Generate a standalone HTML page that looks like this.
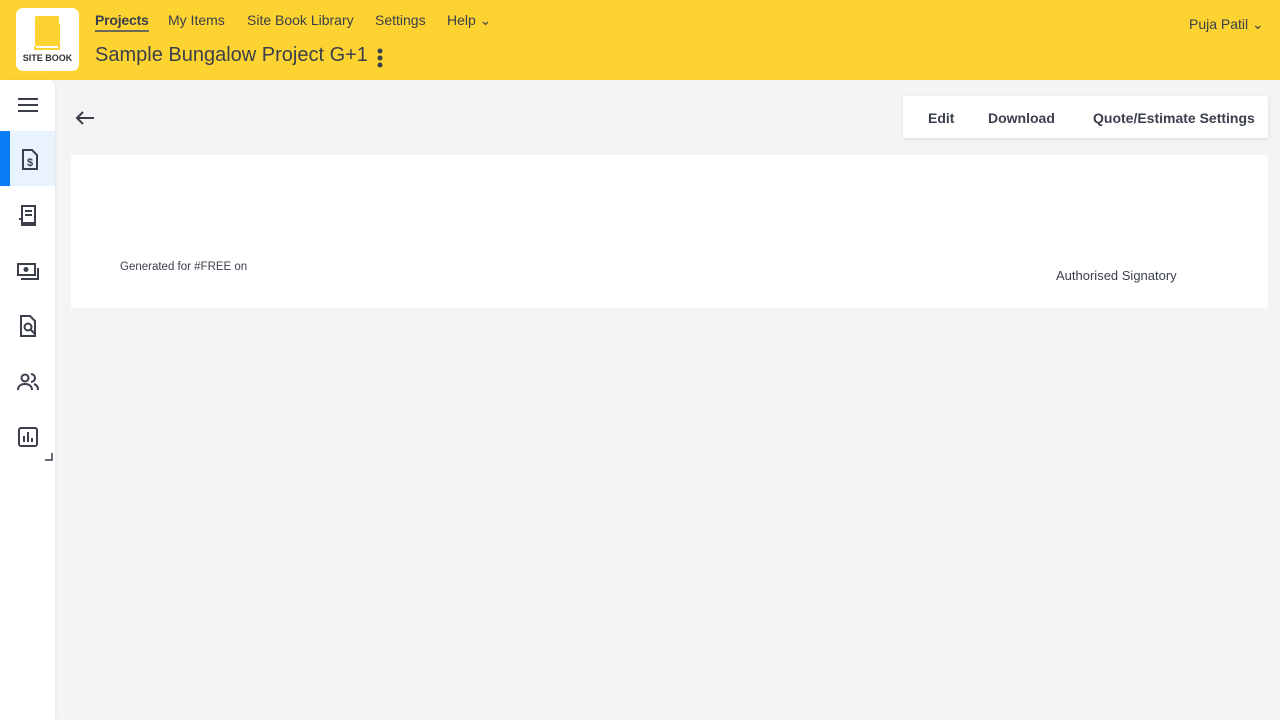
<!DOCTYPE html>
<html><head><style>
*{margin:0;padding:0;box-sizing:border-box}
body{width:1280px;height:720px;background:#f4f4f4;font-family:"Liberation Sans",sans-serif;color:#3a3f4b;position:relative;overflow:hidden}
.top{position:absolute;left:0;top:0;width:1280px;height:80px;background:#fdd331}
.logo{position:absolute;left:16px;top:8px;width:63px;height:63px;background:#fff;border-radius:7px}
.logo span{position:absolute;left:0;width:63px;top:45px;text-align:center;font-size:9px;font-weight:bold;color:#333}
.nav{position:absolute;top:12px;font-size:14px;color:#3a3f4b}
.title{position:absolute;left:95px;top:44px;font-size:20px;color:#3a3f4b}
.side{position:absolute;left:0;top:80px;width:55px;height:640px;background:#fff;border-radius:0 6px 0 0;box-shadow:1px 0 3px rgba(0,0,0,.05)}
.ic{position:absolute;left:17px;width:22px;height:22px}
.btns{position:absolute;left:903px;top:96px;width:365px;height:42px;background:#fff;box-shadow:0 1px 3px rgba(0,0,0,.12);font-size:14px;font-weight:bold}
.btns span{position:absolute;top:14px}
.card{position:absolute;left:71px;top:155px;width:1197px;height:153px;background:#fff}
</style></head><body>
<div class="top">
<div class="logo"><svg style="position:absolute;left:17px;top:6px" width="30" height="38" viewBox="0 0 30 38"><rect x="2" y="2" width="24" height="30" rx="2" fill="#fdd331"/><path d="M2 32 v3 h24" stroke="#fdd331" stroke-width="2" fill="none"/><path d="M26 10 v26" stroke="#fdd331" stroke-width="2"/></svg><span>SITE BOOK</span></div>
<div class="nav" style="left:95px;font-weight:bold;border-bottom:2px solid #6a6a5a;padding-bottom:2px;letter-spacing:-0.2px">Projects</div>
<div class="nav" style="left:168px">My Items</div>
<div class="nav" style="left:247px">Site Book Library</div>
<div class="nav" style="left:375px">Settings</div>
<div class="nav" style="left:447px">Help ⌄</div>
<div class="title">Sample Bungalow Project G+1</div>
<svg style="position:absolute;left:376px;top:48px" width="8" height="20"><circle cx="4" cy="3" r="2.5" fill="#3a3f4b"/><circle cx="4" cy="10" r="2.5" fill="#3a3f4b"/><circle cx="4" cy="17" r="2.5" fill="#3a3f4b"/></svg>
<div class="nav" style="left:1189px;top:16px">Puja Patil ⌄</div>
</div>
<div class="side">
<svg style="position:absolute;left:17px;top:18px" width="22" height="14"><path d="M1 1h20M1 7h20M1 13h20" stroke="#3a3f4b" stroke-width="2"/></svg>
<div style="position:absolute;left:0;top:51px;width:55px;height:55px;background:#e8f3fd"></div>
<div style="position:absolute;left:0;top:51px;width:10px;height:55px;background:#0a7cf5"></div>
<svg class="ic" style="top:69px;left:19px" viewBox="0 0 20 22"><path d="M3 1h9l5 5v14H3z" fill="none" stroke="#3a3f4b" stroke-width="2"/><text x="7" y="17" font-size="11" font-weight="bold" fill="#3a3f4b">$</text></svg>
<svg class="ic" style="top:124px" viewBox="0 0 22 22"><path d="M5 2h13v17H5zM2 15h3v6h14" fill="none" stroke="#3a3f4b" stroke-width="2"/><path d="M8 7h7M8 11h7" stroke="#3a3f4b" stroke-width="2"/></svg>
<svg class="ic" style="top:180px" viewBox="0 0 22 22"><rect x="1" y="4" width="17" height="11" fill="none" stroke="#3a3f4b" stroke-width="2"/><circle cx="9" cy="9.5" r="2.5" fill="#3a3f4b"/><path d="M4 19h17V8" fill="none" stroke="#3a3f4b" stroke-width="2"/></svg>
<svg class="ic" style="top:235px" viewBox="0 0 22 22"><path d="M4 1h9l5 5v15H4z" fill="none" stroke="#3a3f4b" stroke-width="2"/><circle cx="11" cy="12" r="3.5" fill="none" stroke="#3a3f4b" stroke-width="2"/><path d="M13.5 14.5l4 4" stroke="#3a3f4b" stroke-width="2"/></svg>
<svg class="ic" style="top:291px" viewBox="0 0 22 22"><circle cx="8" cy="7" r="3.5" fill="none" stroke="#3a3f4b" stroke-width="2"/><path d="M1 19c0-4 3-6 7-6s7 2 7 6M14 3a4 4 0 010 8M17 13c3 1 4 3 4 6" fill="none" stroke="#3a3f4b" stroke-width="2"/></svg>
<svg class="ic" style="top:346px" viewBox="0 0 22 22"><rect x="2" y="2" width="18" height="18" rx="2" fill="none" stroke="#3a3f4b" stroke-width="2"/><path d="M7 10v6M11 6v10M15 12v4" stroke="#3a3f4b" stroke-width="2"/></svg>
<svg style="position:absolute;left:45px;top:373px" width="8" height="8"><path d="M7 0v7H0" fill="none" stroke="#3a3f4b" stroke-width="1.5"/></svg>
</div>
<svg style="position:absolute;left:75px;top:110px" width="20" height="16"><path d="M19 8H2M8 2L2 8l6 6" fill="none" stroke="#3a3f4b" stroke-width="2"/></svg>
<div class="btns"><span style="left:25px">Edit</span><span style="left:85px">Download</span><span style="left:190px">Quote/Estimate Settings</span></div>
<div class="card">
<div style="position:absolute;left:49px;top:106px;font-size:11.5px">Generated for #FREE on</div>
<div style="position:absolute;left:985px;top:113px;font-size:13px">Authorised Signatory</div>
</div>
</body></html>
